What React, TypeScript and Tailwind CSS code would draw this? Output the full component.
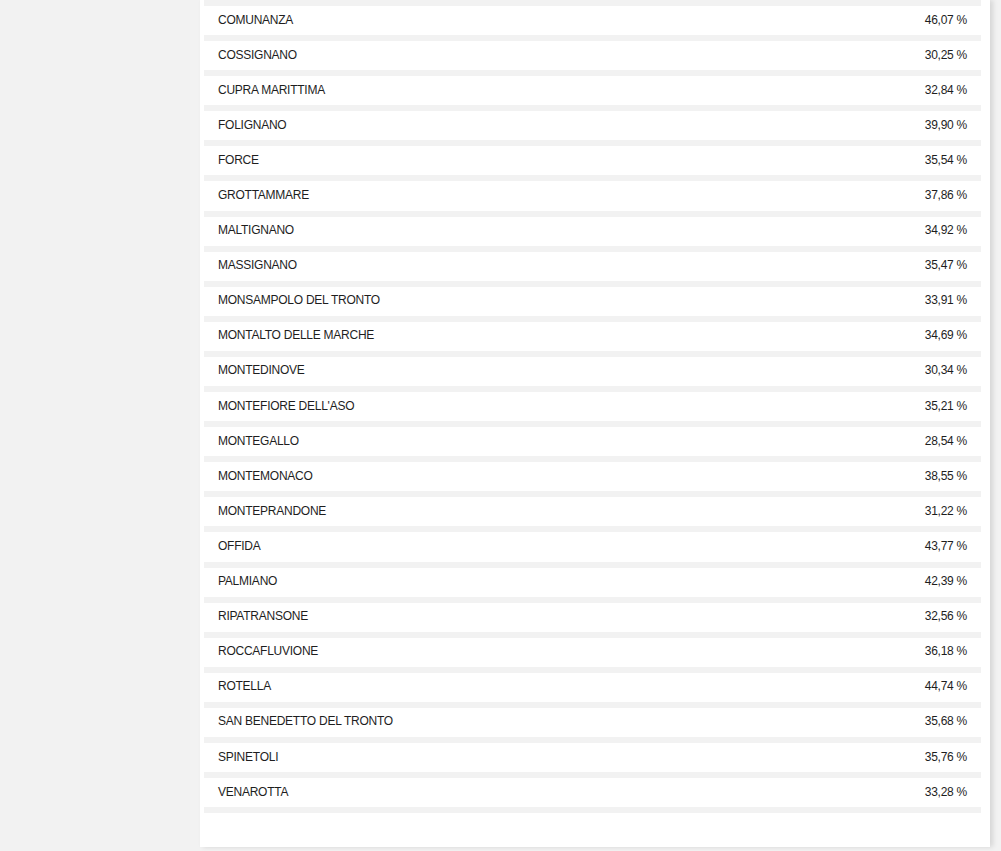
const rows: [string, string][] = [
    ["COMUNANZA", "46,07 %"],
    ["COSSIGNANO", "30,25 %"],
    ["CUPRA MARITTIMA", "32,84 %"],
    ["FOLIGNANO", "39,90 %"],
    ["FORCE", "35,54 %"],
    ["GROTTAMMARE", "37,86 %"],
    ["MALTIGNANO", "34,92 %"],
    ["MASSIGNANO", "35,47 %"],
    ["MONSAMPOLO DEL TRONTO", "33,91 %"],
    ["MONTALTO DELLE MARCHE", "34,69 %"],
    ["MONTEDINOVE", "30,34 %"],
    ["MONTEFIORE DELL'ASO", "35,21 %"],
    ["MONTEGALLO", "28,54 %"],
    ["MONTEMONACO", "38,55 %"],
    ["MONTEPRANDONE", "31,22 %"],
    ["OFFIDA", "43,77 %"],
    ["PALMIANO", "42,39 %"],
    ["RIPATRANSONE", "32,56 %"],
    ["ROCCAFLUVIONE", "36,18 %"],
    ["ROTELLA", "44,74 %"],
    ["SAN BENEDETTO DEL TRONTO", "35,68 %"],
    ["SPINETOLI", "35,76 %"],
    ["VENAROTTA", "33,28 %"],
]

function App() {
    return (
        <div className="w-full h-[851px] overflow-hidden bg-[#f2f2f2] font-['Liberation_Sans',Arial,sans-serif]">
            <div className="ml-[200px] w-[790px] h-[847px] bg-white pl-[4px] pr-[9px] shadow-[3px_0_5px_rgba(0,0,0,0.12)]">
                <div className="flex flex-col">
                    {rows.map(([name, value]) => (
                        <div key={name} className="border-t-[6px] border-[#f2f2f2]">
                            <div className="h-[29.1px] pb-[2px] flex items-center justify-between px-[14px] text-[12px] tracking-[-0.25px] text-[#1e1e1e]">
                                <span>{name}</span>
                                <span>{value}</span>
                            </div>
                        </div>
                    ))}
                    <div className="h-[6px] bg-[#f2f2f2]"/>
                </div>
            </div>
        </div>
    )
}

export default App;
